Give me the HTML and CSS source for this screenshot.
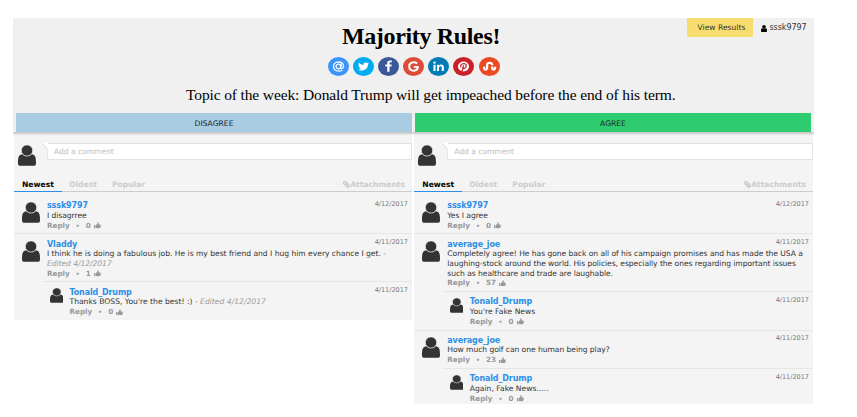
FILE: index.html
```
<!DOCTYPE html>
<html lang="en">
<head>
<meta charset="utf-8">
<title>Majority Rules!</title>
<link rel="stylesheet" href="styles.css">
</head>
<body>
<svg width="0" height="0" class="defs">
  <symbol id="avatar" viewBox="0 0 18 21" preserveAspectRatio="none"><path d="M4.200 9.200C1 9.500 0 12 0 17.500V18.200Q0 20.800 2.500 20.800H15.500Q18 20.800 18 18.200V17.500C18 12 17 9.500 13.800 9.200Q9 13 4.200 9.200Z"/><ellipse cx="9" cy="5.500" rx="5.700" ry="5.600" stroke="#f4f4f4" stroke-width=".7"/></symbol>
  <symbol id="user" viewBox="256 128 1280 1536" preserveAspectRatio="none"><path d="M1536 1399q0 109-62.500 187t-150.500 78h-854q-88 0-150.500-78t-62.500-187q0-85 8.500-160.500t31.500-152 58.500-131 94-89 134.500-34.500q131 128 313 128t313-128q76 0 134.500 34.500t94 89 58.500 131 31.500 152 8.500 160.500zm-256-887q0 159-112.500 271.500t-271.500 112.500-271.500-112.500-112.500-271.500 112.500-271.500 271.500-112.500 271.500 112.500 112.500 271.500z"/></symbol>
  <symbol id="thumb" viewBox="0 0 14 13" preserveAspectRatio="none"><path d="M0 6h3v7H0zM4 6C6 5 7 3 7 .5Q9.500-.3 9.500 2.500L9 5h3.500Q14 5.200 13.600 7L12.500 11.500Q12 13 10.500 13H7L4 12z"/></symbol>
  <symbol id="clip" viewBox="0 0 14 14"><path d="M4 4l6 6q1.500 1 2.400.2t0-2.200L6 1.700Q4-.2 2 1.500T1.500 5.500L8 12q2 1.500 4 0" fill="none" stroke="currentColor" stroke-width="2.400"/></symbol>
</svg>
<div class="page">
  <header class="header">
    <div class="account"><a class="results">View Results</a><span class="me"><svg><use href="#user"/></svg><span>sssk9797</span></span></div>
    <h1>Majority Rules!</h1>
    <div class="social">
      <svg class="at" viewBox="0 0 20 20" preserveAspectRatio="none"><g fill="none" stroke="#fff" stroke-width="1.200"><ellipse cx="9.900" cy="10" rx="2.200" ry="2.500"/><path d="M12.700 7l-.6 4.300q0 1.300 1 1.200 1.600-.5 1.700-2.900Q14.400 5.300 10.200 5.200 5.500 5.400 5.200 10q.3 4.700 5 4.900 1.900 0 3.500-1"/></g></svg>
      <svg class="tw" viewBox="0 0 20 20" preserveAspectRatio="none"><path fill="#fff" transform="translate(4 4) scale(.0067)" d="M1684 408q-67 98-162 167 1 14 1 42 0 130-38 259.500t-115.500 248.500-184.500 210.500-258 146-323 54.500q-271 0-496-145 35 4 78 4 225 0 401-138-105-2-188-64.500t-114-159.500q33 5 61 5 43 0 85-11-112-23-185.500-111.500t-73.500-205.500v-4q68 38 146 41-66-44-105-115t-39-154q0-88 44-163 121 149 294.500 238.500t371.500 99.500q-8-38-8-74 0-134 94.500-228.500t228.500-94.500q140 0 236 102 109-21 205-78-37 115-142 178 93-10 186-50z"/></svg>
      <svg class="fb" viewBox="0 0 20 20" preserveAspectRatio="none"><path fill="#fff" transform="translate(3.500 3.600) scale(.0072)" d="M1343 12v264h-157q-86 0-116 36t-30 108v189h293l-39 296h-254v759h-306v-759h-255v-296h255v-218q0-186 104-288.500t277-102.500q147 0 228 12z"/></svg>
      <svg class="gp" viewBox="0 0 20 20" preserveAspectRatio="none"><path fill="none" stroke="#fff" stroke-width="2" d="M13.400 6.800Q11.900 5.500 10.200 5.600 6 6 5.900 10q.2 4.200 4.300 4.400 3.700-.2 3.900-4H10.300"/></svg>
      <svg class="li" viewBox="0 0 20 20" preserveAspectRatio="none"><path fill="#fff" d="M5.200 8.200h2v6.500h-2zM8.500 8.200h1.900v.9q.8-1.100 2.200-1.100 2.500.1 2.500 3v3.700h-2v-3.500q0-1.500-1.100-1.500-1.500 0-1.500 1.700v3.300h-2z"/><circle cx="6.200" cy="6" r="1.150" fill="#fff"/></svg>
      <svg class="pi" viewBox="0 0 20 20" preserveAspectRatio="none"><circle cx="10" cy="10" r="5.200" fill="#fff"/><path fill="none" stroke="#cb2027" stroke-width="1.200" d="M8.600 15.300l1.500-6.500M7.800 10.900Q6.800 9.800 7.500 8.400 8.500 6.900 10.300 6.900 12.600 7.200 12.600 9.200 12.200 12 10.600 12 9.700 12 9.400 11.300"/></svg>
      <svg class="su" viewBox="0 0 20 20" preserveAspectRatio="none"><path fill="none" stroke="#fff" stroke-width="2.200" d="M4.900 10.300v1.600q.1 1.500 1.400 1.500t1.400-1.500V8q.2-1.900 2.400-2 2.200.1 2.400 2v.8M12.500 9.900v2q.1 1.500 1.400 1.500t1.400-1.500v-1.600"/></svg>
    </div>
    <p class="topic">Topic of the week: Donald Trump will get impeached before the end of his term.</p>
    <div class="votes"><a class="vote no">DISAGREE</a><a class="vote yes">AGREE</a></div>
  </header>
  <main class="columns">
    <section class="column left">
      <div class="compose"><svg class="avatar"><use href="#avatar"/></svg><div class="box"><svg class="notch" viewBox="0 0 6 6"><path d="M0 0H6V6Z" fill="#fff"/><path d="M0 .5L5.500 5.500" stroke="#ddd"/></svg>Add a comment</div></div>
      <nav class="tabs"><a class="on">Newest</a><a class="old">Oldest</a><a>Popular</a><a class="attach"><svg><use href="#clip"/></svg>Attachments</a></nav>
      <article class="comment first"><svg class="avatar"><use href="#avatar"/></svg><div><time>4/12/2017</time><b>sssk9797</b><p>I disagrree</p><footer>Reply<i>•</i>0<svg><use href="#thumb"/></svg></footer></div></article>
      <article class="comment"><svg class="avatar"><use href="#avatar"/></svg><div><time>4/11/2017</time><b>Vladdy</b><p><span class="wide">I think he is doing a fabulous job. He is my best friend and I hug him every chance I get.</span> <em>-<br>Edited 4/12/2017</em></p><footer>Reply<i>•</i>1<svg><use href="#thumb"/></svg></footer></div></article>
      <article class="comment nested"><svg class="avatar"><use href="#avatar"/></svg><div><time>4/11/2017</time><b>Tonald_Drump</b><p>Thanks BOSS, You're the best! :) <em>- Edited 4/12/2017</em></p><footer>Reply<i>•</i>0<svg><use href="#thumb"/></svg></footer></div></article>
    </section>
    <section class="column right">
      <div class="compose"><svg class="avatar"><use href="#avatar"/></svg><div class="box"><svg class="notch" viewBox="0 0 6 6"><path d="M0 0H6V6Z" fill="#fff"/><path d="M0 .5L5.500 5.500" stroke="#ddd"/></svg>Add a comment</div></div>
      <nav class="tabs"><a class="on">Newest</a><a class="old">Oldest</a><a>Popular</a><a class="attach"><svg><use href="#clip"/></svg>Attachments</a></nav>
      <article class="comment first"><svg class="avatar"><use href="#avatar"/></svg><div><time>4/12/2017</time><b>sssk9797</b><p>Yes I agree</p><footer>Reply<i>•</i>0<svg><use href="#thumb"/></svg></footer></div></article>
      <article class="comment"><svg class="avatar"><use href="#avatar"/></svg><div><time>4/11/2017</time><b>average_joe</b><p>Completely agree! He has gone back on all of his campaign promises and has made the USA a<br>laughing-stock around the world. His policies, especially the ones regarding important issues<br>such as healthcare and trade are laughable.</p><footer>Reply<i>•</i>57<svg><use href="#thumb"/></svg></footer></div></article>
      <article class="comment nested"><svg class="avatar"><use href="#avatar"/></svg><div><time>4/11/2017</time><b>Tonald_Drump</b><p>You're Fake News</p><footer>Reply<i>•</i>0<svg><use href="#thumb"/></svg></footer></div></article>
      <article class="comment"><svg class="avatar"><use href="#avatar"/></svg><div><time>4/11/2017</time><b>average_joe</b><p>How much golf can one human being play?</p><footer>Reply<i>•</i>23<svg><use href="#thumb"/></svg></footer></div></article>
      <article class="comment nested"><svg class="avatar"><use href="#avatar"/></svg><div><time>4/11/2017</time><b>Tonald_Drump</b><p>Again, Fake News.....</p><footer>Reply<i>•</i>0<svg><use href="#thumb"/></svg></footer></div></article>
    </section>
  </main>
</div>
</body>
</html>
```
FILE: styles.css
```
* { box-sizing: border-box; }
body { margin: 0; background: #fff; font: 7.6px/9.7px "DejaVu Sans", Verdana, sans-serif; color: #333; overflow: hidden; }
.defs { position: absolute; }
svg { display: block; fill: #333; flex: none; }
.page { width: 801px; height: 386px; margin: 18px 0 0 13px; overflow: hidden; }
.header { position: relative; height: 115px; background: #f0f0f0; border-bottom: 1px solid #c8c8c8; box-shadow: 0 1px 2px rgba(0,0,0,.18); z-index: 1; }
.account { position: absolute; top: 0; right: 0; display: flex; }
.results { width: 66px; height: 19px; background: #f7dc6f; text-align: center; line-height: 20px; padding-left: 3px; white-space: nowrap; }
.me { width: 61px; display: flex; align-items: center; padding-left: 8px; gap: 2.500px; font-size: 8px; letter-spacing: -.05px; height: 20px; }
.me svg { width: 6px; height: 7px; fill: #000; }
h1 { margin: 0; padding-top: 4px; padding-left: 15px; font: bold 24px/28px "Liberation Serif", serif; letter-spacing: -.34px; color: #000; text-align: center; }
.social { display: flex; gap: 4.100px; margin: 7px 0 0 315px; }
.social svg { width: 21px; height: 19px; border-radius: 50%; }
.at { background: #3b94f7; }
.tw { background: #00acee; }
.fb { background: #3b5998; }
.gp { background: #dd4b39; }
.li { background: #007bb6; }
.pi { background: #cb2027; }
.su { background: #eb4823; }
.topic { margin: 9px 0 0 173px; font: 15.500px/20px "Liberation Serif", serif; letter-spacing: -.13px; color: #000; white-space: nowrap; }
.votes { display: flex; gap: 3px; margin: 8px 3px 0; }
.vote { flex: 1; height: 19px; line-height: 21px; text-align: center; color: #222; }
.no { background: #a9cce3; }
.yes { background: #2ecc71; }
.columns { display: flex; justify-content: space-between; align-items: flex-start; padding: 0 1px; }
.column { width: 398px; background: #f4f4f4; }
.right { width: 398.700px; }
.compose { display: flex; height: 44px; padding: 10px 0 0 4px; }
.avatar { width: 18px; height: 21px; margin-top: 2px; }
.box { position: relative; flex: 1; height: 17px; margin-left: 11px; padding-left: 6px; background: #fff; border: 1px solid #e2e2e2; border-left-color: #e8e8e8; color: #bdbdbd; line-height: 15px; letter-spacing: -.04px; }
.notch { position: absolute; left: -6px; top: -1px; width: 6px; height: 6px; }
.tabs { display: flex; height: 15px; border-bottom: 1px solid #ccc; font-weight: bold; color: #ccc; line-height: 15px; }
.on { width: 48px; height: 15px; padding-left: 8px; color: #000; border-bottom: 1px solid #2e8fe6; }
.old { padding-left: 7px; width: 50px; }
.attach { display: flex; margin-left: auto; padding-right: 7px; align-items: center; }
.attach svg { width: 7px; height: 7px; color: #ccc; }
.comment { display: flex; padding: 5.200px 4px 3.100px 7.600px; border-top: 1px solid #e6e6e6; }
.comment .avatar { margin-top: 1px; }
.comment > div { flex: 1; position: relative; margin-left: 7.400px; white-space: nowrap; }
.first { border-top-color: transparent; padding-top: 8.200px; }
.nested { margin-left: 29px; padding-left: 6.600px; }
.comment.nested .avatar { width: 13.500px; height: 15px; margin-top: .600px; }
.nested > div { margin-left: 6.400px; }
time { position: absolute; right: 0; top: -1.600px; font-size: 6.500px; color: #777; }
b { display: block; color: #2e8fe6; font-size: 8px; letter-spacing: -.13px; }
p { margin: 0; letter-spacing: -.055px; }
.nested p { letter-spacing: .01px; }
.wide { letter-spacing: -.02px; }
em { color: #999; }
footer { display: flex; align-items: center; font-weight: bold; color: #999; font-size: 7.200px; line-height: 9.700px; }
footer i { width: 16px; text-align: center; font-style: normal; font-size: 6px; }
footer svg { width: 7px; height: 6.500px; margin-left: 3px; fill: #999; }
```
